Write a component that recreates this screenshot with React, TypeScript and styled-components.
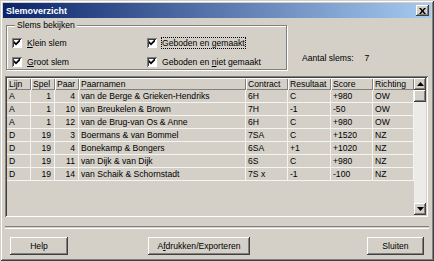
import React from "react";
import styled, { createGlobalStyle } from "styled-components";

const GlobalStyle = createGlobalStyle`
  html, body {
    margin: 0;
    padding: 0;
    background: #d4d0c8;
  }
  body {
    font-family: "Liberation Sans", Arial, sans-serif;
    font-size: 8.6px;
    color: #000;
  }
`;

interface SlemRow {
  lijn: string;
  spel: number;
  paar: number;
  namen: string;
  contract: string;
  resultaat: string;
  score: string;
  richting: string;
}

const rows: SlemRow[] = [
  { lijn: "A", spel: 1, paar: 4, namen: "van de Berge & Grieken-Hendriks", contract: "6H", resultaat: "C", score: "+980", richting: "OW" },
  { lijn: "A", spel: 1, paar: 10, namen: "van Breukelen & Brown", contract: "7H", resultaat: "-1", score: "-50", richting: "OW" },
  { lijn: "A", spel: 1, paar: 12, namen: "van de Brug-van Os & Anne", contract: "6H", resultaat: "C", score: "+980", richting: "OW" },
  { lijn: "D", spel: 19, paar: 3, namen: "Boermans & van Bommel", contract: "7SA", resultaat: "C", score: "+1520", richting: "NZ" },
  { lijn: "D", spel: 19, paar: 4, namen: "Bonekamp & Bongers", contract: "6SA", resultaat: "+1", score: "+1020", richting: "NZ" },
  { lijn: "D", spel: 19, paar: 11, namen: "van Dijk & van Dijk", contract: "6S", resultaat: "C", score: "+980", richting: "NZ" },
  { lijn: "D", spel: 19, paar: 14, namen: "van Schaik & Schornstadt", contract: "7S x", resultaat: "-1", score: "-100", richting: "NZ" },
];

// column widths in px, same order as header
const columns: { label: string; width: number; right?: boolean }[] = [
  { label: "Lijn", width: 24 },
  { label: "Spel", width: 24, right: true },
  { label: "Paar", width: 24, right: true },
  { label: "Paarnamen", width: 167 },
  { label: "Contract", width: 42 },
  { label: "Resultaat", width: 43 },
  { label: "Score", width: 42 },
  { label: "Richting", width: 41 },
];

const Window = styled.div`
  width: 434px;
  height: 261px;
  box-sizing: border-box;
  padding: 3px;
  display: flex;
  flex-direction: column;
  background: #d4d0c8;
  box-shadow: inset 1px 1px #d4d0c8, inset -1px -1px #404040,
    inset 2px 2px #fff, inset -2px -2px #808080;
`;

const TitleBar = styled.div`
  height: 15px;
  flex: none;
  display: flex;
  align-items: center;
  padding-left: 3px;
  background: linear-gradient(to right, #0a246a, #a6caf0);
  color: #fff;
  font-weight: bold;
  font-size: 9px;
`;

const TitleText = styled.span`
  flex: 1;
`;

const CloseButton = styled.div`
  width: 13px;
  height: 11px;
  margin-right: 2px;
  display: flex;
  align-items: center;
  justify-content: center;
  background: #d4d0c8;
  box-shadow: inset -1px -1px #404040, inset 1px 1px #fff,
    inset -2px -2px #808080;
`;

const Body = styled.div`
  flex: 1;
  display: flex;
  flex-direction: column;
  padding: 0 2px 4px 2px;
`;

const TopRow = styled.div`
  display: flex;
  align-items: flex-end;
  margin-top: 2px;
`;

const GroupBox = styled.fieldset`
  width: 281px;
  height: 50px;
  box-sizing: border-box;
  margin: 0 0 0 1px;
  padding: 3px 0 0 5px;
  border: 1px solid #808080;
  box-shadow: inset 1px 1px #fff, 1px 1px #fff;
  display: grid;
  grid-template-columns: 135px 1fr;
  grid-auto-rows: 19px;
  align-content: start;
`;

const Legend = styled.legend`
  padding: 0 2px;
  margin-left: 3px;
  line-height: 10px;
  background: #d4d0c8;
`;

const CheckRow = styled.label`
  display: flex;
  align-items: center;
  gap: 5px;
  white-space: nowrap;
`;

const Box = styled.span`
  width: 10px;
  height: 10px;
  flex: none;
  box-sizing: border-box;
  background: #fff;
  display: flex;
  align-items: center;
  justify-content: center;
  box-shadow: inset 1px 1px #808080, inset -1px -1px #fff,
    inset 2px 2px #404040;
`;

const CheckText = styled.span<{ $focus?: boolean }>`
  padding: 1px 1px;
  margin-left: -1px;
  outline: ${(p) => (p.$focus ? "1px dotted #000" : "none")};
  outline-offset: -1px;
`;

const Count = styled.div`
  display: flex;
  gap: 11px;
  padding-left: 15px;
  margin-bottom: 7px;
`;

const ListView = styled.div`
  margin-top: 6px;
  height: 141px;
  width: 423px;
  box-sizing: border-box;
  padding: 2px;
  display: flex;
  box-shadow: inset 1px 1px #808080, inset -1px -1px #fff,
    inset 2px 2px #404040, inset -2px -2px #d4d0c8;
`;

const Table = styled.div`
  flex: 1;
  display: flex;
  flex-direction: column;
`;

const HeaderRow = styled.div`
  display: flex;
  height: 12px;
`;

const HeaderCell = styled.div<{ $w: number }>`
  width: ${(p) => p.$w}px;
  box-sizing: border-box;
  padding-left: 2px;
  line-height: 12px;
  white-space: nowrap;
  overflow: hidden;
  box-shadow: inset 1px 1px #fff, inset -1px -1px #808080;
`;

const DataRow = styled.div`
  display: flex;
  height: 13px;
`;

const Cell = styled.div<{ $w: number; $right?: boolean }>`
  width: ${(p) => p.$w}px;
  box-sizing: border-box;
  padding: 0 3px 0 2px;
  line-height: 12px;
  white-space: nowrap;
  overflow: hidden;
  text-align: ${(p) => (p.$right ? "right" : "left")};
  border-right: 1px solid #f4f4f0;
  border-bottom: 1px solid #f4f4f0;
`;

const ScrollBar = styled.div`
  width: 12px;
  display: flex;
  flex-direction: column;
  background: #ecebe8;
`;

const ScrollButton = styled.div`
  height: 12px;
  flex: none;
  display: flex;
  align-items: center;
  justify-content: center;
  background: #d4d0c8;
  box-shadow: inset -1px -1px #404040, inset 1px 1px #fff,
    inset -2px -2px #808080;
`;

const Thumb = styled(ScrollButton)`
  height: 12px;
`;

const Track = styled.div`
  flex: 1;
`;

const Separator = styled.div`
  margin-top: 9px;
  height: 1px;
  border-top: 1px solid #808080;
  border-bottom: 1px solid #fff;
`;

const ButtonRow = styled.div`
  display: flex;
  margin-top: 8px;
  padding: 0 5px 0 5px;
`;

const Button = styled.div<{ $w: number; $gap?: number }>`
  width: ${(p) => p.$w}px;
  height: 18px;
  margin-left: ${(p) => p.$gap ?? 0}px;
  display: flex;
  align-items: center;
  justify-content: center;
  background: #d4d0c8;
  box-shadow: inset -1px -1px #404040, inset 1px 1px #fff,
    inset -2px -2px #808080;
`;

const Spacer = styled.div`
  flex: 1;
`;

const Check = () => (
  <svg width="7" height="7" viewBox="0 0 7 7">
    <path d="M0 2 L2 4 L6 0 L6 2.5 L2 6.5 L0 4.5 Z" fill="#000" />
  </svg>
);

const Checkbox = ({ children, focus }: { children: React.ReactNode; focus?: boolean }) => (
  <CheckRow>
    <Box>
      <Check />
    </Box>
    <CheckText $focus={focus}>{children}</CheckText>
  </CheckRow>
);

export default function App() {
  return (
    <>
      <GlobalStyle />
      <Window>
        <TitleBar>
          <TitleText>Slemoverzicht</TitleText>
          <CloseButton>
            <svg width="7" height="6" viewBox="0 0 7 6">
              <path d="M0 0 L2 0 L3.5 2 L5 0 L7 0 L4.5 3 L7 6 L5 6 L3.5 4 L2 6 L0 6 L2.5 3 Z" fill="#000" />
            </svg>
          </CloseButton>
        </TitleBar>
        <Body>
          <TopRow>
            <GroupBox>
              <Legend>Slems bekijken</Legend>
              <Checkbox>
                <u>K</u>lein slem
              </Checkbox>
              <Checkbox focus>Geboden en gemaakt</Checkbox>
              <Checkbox>
                <u>G</u>root slem
              </Checkbox>
              <Checkbox>
                Geboden en <u>n</u>iet gemaakt
              </Checkbox>
            </GroupBox>
            <Count>
              <span>Aantal slems:</span>
              <span>7</span>
            </Count>
          </TopRow>

          <ListView>
            <Table>
              <HeaderRow>
                {columns.map((c) => (
                  <HeaderCell key={c.label} $w={c.width}>
                    {c.label}
                  </HeaderCell>
                ))}
              </HeaderRow>
              {rows.map((r, i) => {
                const values = [r.lijn, r.spel, r.paar, r.namen, r.contract, r.resultaat, r.score, r.richting];
                return (
                  <DataRow key={i}>
                    {values.map((v, j) => (
                      <Cell key={j} $w={columns[j].width} $right={columns[j].right}>
                        {v}
                      </Cell>
                    ))}
                  </DataRow>
                );
              })}
            </Table>
            <ScrollBar>
              <ScrollButton>
                <svg width="7" height="4" viewBox="0 0 7 4">
                  <path d="M3.5 0 L7 4 L0 4 Z" fill="#000" />
                </svg>
              </ScrollButton>
              <Thumb />
              <Track />
              <ScrollButton>
                <svg width="7" height="4" viewBox="0 0 7 4">
                  <path d="M0 0 L7 0 L3.5 4 Z" fill="#000" />
                </svg>
              </ScrollButton>
            </ScrollBar>
          </ListView>

          <Separator />

          <ButtonRow>
            <Button $w={58}>Help</Button>
            <Button $w={102} $gap={80}>
              A<u>f</u>drukken/Exporteren
            </Button>
            <Spacer />
            <Button $w={57}>Sluiten</Button>
          </ButtonRow>
        </Body>
      </Window>
    </>
  );
}
